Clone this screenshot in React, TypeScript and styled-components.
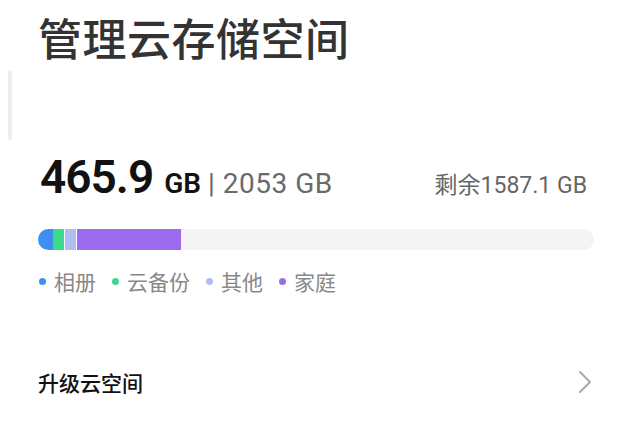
import React from "react";
import styled, { createGlobalStyle } from "styled-components";

const GlobalStyle = createGlobalStyle`
  html, body {
    margin: 0;
    padding: 0;
    background: #ffffff;
    font-family: "Noto Sans CJK SC", "Noto Sans", sans-serif;
  }
`;

const latin = '"Roboto", "Noto Sans CJK SC", sans-serif';

const Page = styled.div({
  position: "relative",
  width: "640px",
  height: "442px",
  overflow: "hidden",
  background: "#ffffff",
  padding: "14px 46px 0 38px",
  boxSizing: "border-box",
});

const ScrollThumb = styled.div({
  position: "absolute",
  left: "8px",
  top: "70px",
  width: "4px",
  height: "70px",
  borderRadius: "2px",
  background: "#eeeeee",
});

const Title = styled.h1({
  margin: 0,
  fontSize: "44px",
  lineHeight: "46px",
  fontWeight: 500,
  color: "#333333",
  letterSpacing: "0.5px",
});

const SummaryRow = styled.div({
  display: "flex",
  alignItems: "baseline",
  justifyContent: "space-between",
  marginTop: "94px",
  paddingLeft: "2px",
  paddingRight: "7px",
  fontFamily: latin,
});

const Used = styled.div({
  display: "flex",
  alignItems: "baseline",
  color: "#111111",
});

const BigNumber = styled.span({
  fontSize: "46px",
  fontWeight: 600,
  lineHeight: "46px",
  letterSpacing: "-1px",
});

const Unit = styled.span<{ $muted?: boolean }>(({ $muted }) => ({
  fontSize: "28px",
  fontWeight: $muted ? 400 : 600,
  color: $muted ? "#6a6a6a" : "#111111",
  marginLeft: $muted ? "7px" : "11px",
  letterSpacing: $muted ? "0.5px" : "0",
}));

const Remaining = styled.span({
  fontSize: "23px",
  color: "#666666",
});

const Bar = styled.div({
  display: "flex",
  height: "21px",
  marginTop: "29px",
  borderRadius: "11px",
  background: "#f4f4f4",
  overflow: "hidden",
});

const Segment = styled.div<{ $color: string; $w: number; $gap?: boolean }>(
  ({ $color, $w, $gap }) => ({
    width: `${$w}px`,
    background: $color,
    borderRight: $gap ? "1px solid #ffffff" : "none",
  })
);

const Legend = styled.div({
  display: "flex",
  alignItems: "center",
  gap: "15px",
  marginTop: "16px",
});

const LegendItem = styled.div({
  display: "flex",
  alignItems: "center",
  gap: "8px",
  fontSize: "21px",
  color: "#888888",
});

const Dot = styled.span<{ $color: string }>(({ $color }) => ({
  width: "7px",
  height: "7px",
  borderRadius: "50%",
  background: $color,
  marginLeft: "1px",
}));

const UpgradeRow = styled.div({
  display: "flex",
  alignItems: "center",
  justifyContent: "space-between",
  marginTop: "71px",
  paddingRight: "1px",
});

const UpgradeLabel = styled.span({
  fontSize: "21px",
  fontWeight: 500,
  color: "#111111",
});

const segments = [
  { color: "#3d8ff2", w: 15, gap: false },
  { color: "#3cd98f", w: 11, gap: true },
  { color: "#aebdf2", w: 11, gap: true },
  { color: "#9b6cf0", w: 104, gap: false },
];

const legend = [
  { color: "#3d8ff2", label: "相册" },
  { color: "#3cd98f", label: "云备份" },
  { color: "#aebdf2", label: "其他" },
  { color: "#9b6cf0", label: "家庭" },
];

const App = () => {
  return (
    <>
      <GlobalStyle />
      <Page>
        <ScrollThumb />
        <Title>管理云存储空间</Title>
        <SummaryRow>
          <Used>
            <BigNumber>465.9</BigNumber>
            <Unit>GB</Unit>
            <Unit $muted>| 2053 GB</Unit>
          </Used>
          <Remaining>剩余1587.1 GB</Remaining>
        </SummaryRow>
        <Bar>
          {segments.map((s, i) => (
            <Segment key={i} $color={s.color} $w={s.w} $gap={s.gap} />
          ))}
        </Bar>
        <Legend>
          {legend.map((l) => (
            <LegendItem key={l.label}>
              <Dot $color={l.color} />
              {l.label}
            </LegendItem>
          ))}
        </Legend>
        <UpgradeRow>
          <UpgradeLabel>升级云空间</UpgradeLabel>
          <svg width="16" height="24" viewBox="0 0 16 24" fill="none">
            <path d="M3 2 L13 12 L3 22" stroke="#aaaaaa" strokeWidth="2" strokeLinecap="round" strokeLinejoin="round" />
          </svg>
        </UpgradeRow>
      </Page>
    </>
  );
};

export default App;
